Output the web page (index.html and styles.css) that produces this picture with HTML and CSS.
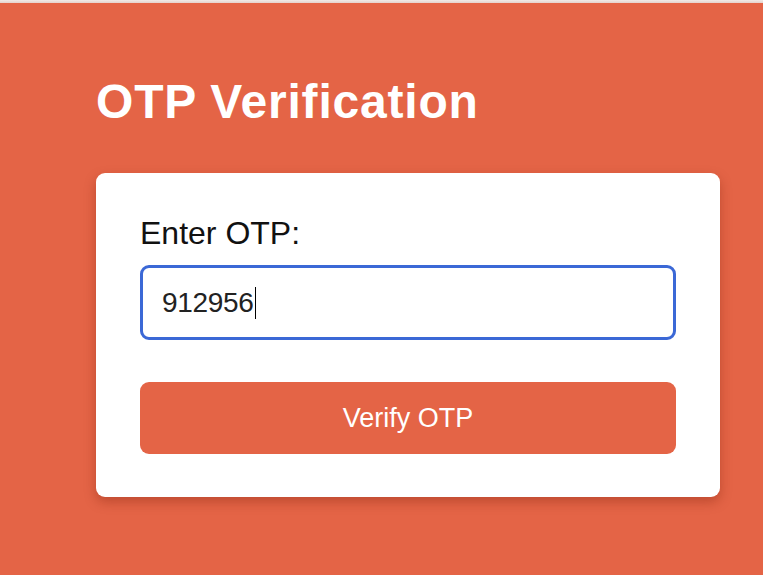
FILE: index.html
```html
<!DOCTYPE html>
<html>
<head>
<meta charset="utf-8">
<link rel="stylesheet" href="styles.css">
</head>
<body>
<div class="topstrip"></div>
<main class="page">
  <h1 class="title">OTP Verification</h1>
  <form class="card">
    <label class="label">Enter OTP:</label>
    <div class="input"><span class="value">912956</span><span class="caret"></span></div>
    <button type="button" class="btn">Verify OTP</button>
  </form>
</main>
</body>
</html>
```
FILE: styles.css
```css
html, body {
  margin: 0;
  padding: 0;
}
body {
  background: #e46446;
  font-family: "Liberation Sans", Arial, sans-serif;
  height: 575px;
  overflow: hidden;
}
.topstrip {
  height: 3px;
  background: linear-gradient(#f0ebe8, #e6d2cc);
}
.page {
  padding: 0 43px 0 96px;
}
.title {
  margin: 0;
  padding-top: 71px;
  font-size: 48px;
  line-height: 55px;
  letter-spacing: 0.8px;
  font-weight: bold;
  color: #ffffff;
}
.card {
  margin-top: 44px;
  width: 624px;
  box-sizing: border-box;
  background: #ffffff;
  border-radius: 9px;
  box-shadow: 0 5px 12px rgba(120, 30, 10, 0.35);
  padding: 42px 44px 43px 44px;
  display: flex;
  flex-direction: column;
}
.label {
  font-size: 32px;
  line-height: 37px;
  color: #111;
}
.input {
  margin-top: 13px;
  height: 75px;
  box-sizing: border-box;
  border: 3px solid #3b68d6;
  border-radius: 9px;
  display: flex;
  align-items: center;
  padding-left: 19px;
}
.value {
  font-size: 28px;
  color: #222;
  letter-spacing: -0.3px;
}
.caret {
  width: 1.5px;
  height: 32px;
  background: #000;
  margin-left: 1px;
}
.btn {
  margin-top: 42px;
  height: 72px;
  border: none;
  border-radius: 9px;
  background: #e46446;
  color: #ffffff;
  font-family: "Liberation Sans", Arial, sans-serif;
  font-size: 27px;
  padding: 0;
}
```
